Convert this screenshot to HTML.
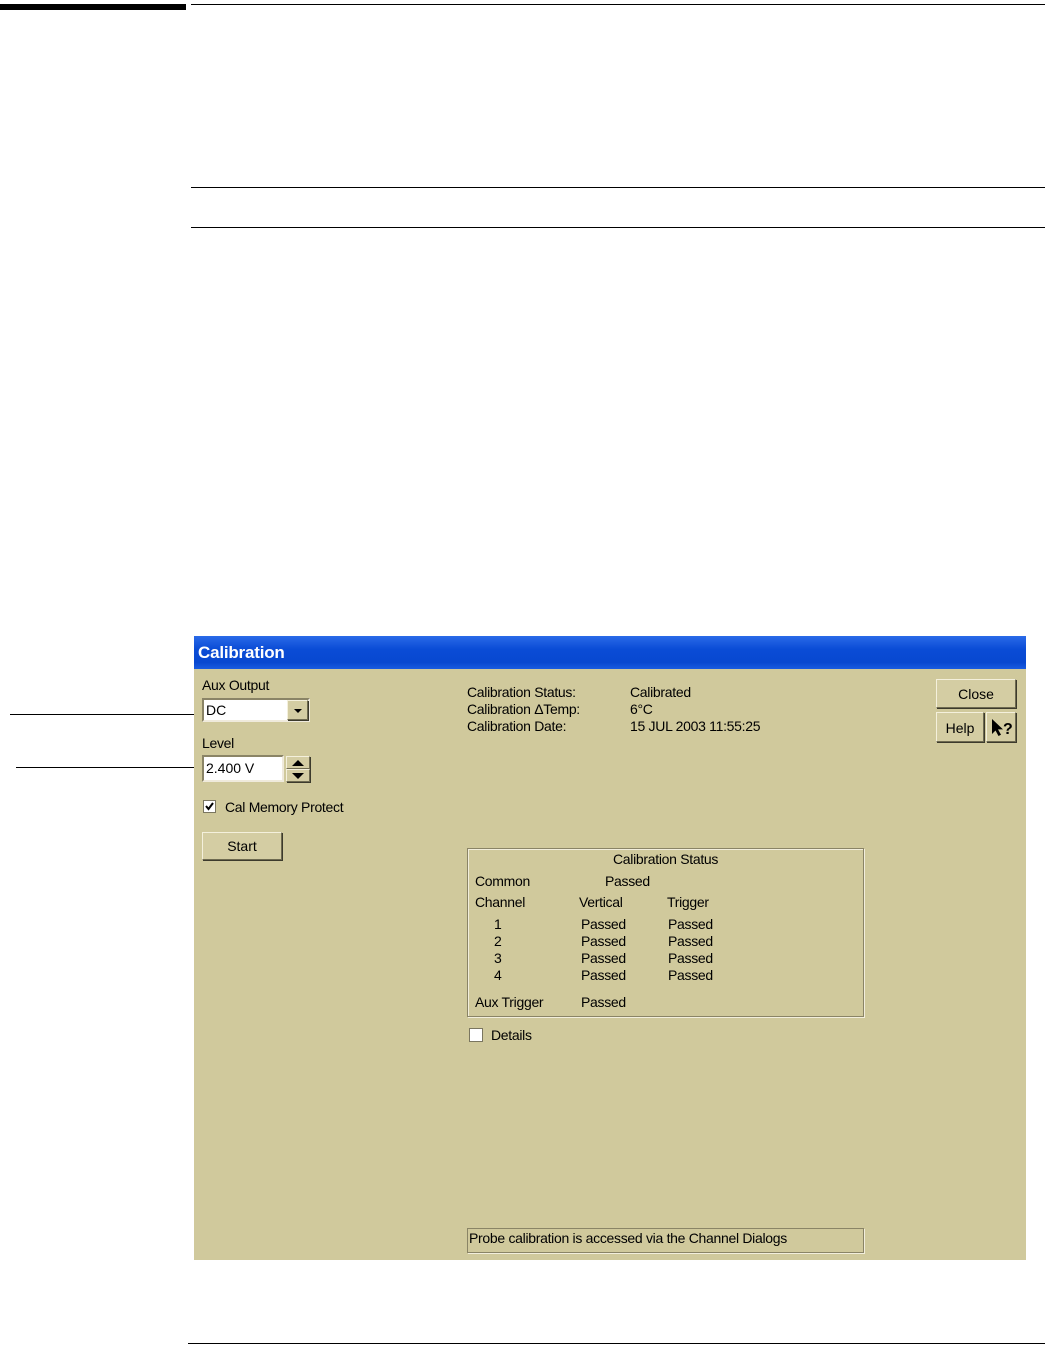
<!DOCTYPE html>
<html><head><meta charset="utf-8"><style>
body{margin:0;width:1047px;height:1345px;background:#fff;position:relative;font-family:"Liberation Sans",sans-serif;overflow:hidden}
.a{position:absolute}
.t{position:absolute;font-size:14px;color:#000;white-space:nowrap;letter-spacing:-0.3px}
.btn{position:absolute;background:#d4cda3;border:1px solid #f4f0dc;border-right-color:#6e6a50;border-bottom-color:#6e6a50;box-shadow:1px 1px 0 #3c3a2c;font-size:14px;text-align:center;box-sizing:border-box}
.field{position:absolute;background:#fff;border:2px solid #8a8466;border-right-color:#efeadc;border-bottom-color:#efeadc;box-sizing:border-box;font-size:14px;padding-left:2px}
svg{position:absolute;left:0;top:0}
</style></head><body>
<div class="a" style="left:0;top:4px;width:186px;height:6px;background:#000"></div>
<div class="a" style="left:191px;top:4px;width:854px;height:1px;background:#000"></div>
<div class="a" style="left:191px;top:187px;width:854px;height:1px;background:#000"></div>
<div class="a" style="left:191px;top:227px;width:854px;height:1px;background:#000"></div>
<div class="a" style="left:188px;top:1343px;width:857px;height:1px;background:#000"></div>
<div class="a" style="left:10px;top:714px;width:194px;height:1px;background:#000"></div>
<div class="a" style="left:16px;top:767px;width:188px;height:1px;background:#000"></div>

<div class="a" style="left:194px;top:636px;width:832px;height:624px;background:#d0c99c"></div>
<div class="a" style="left:194px;top:636px;width:832px;height:33px;background:linear-gradient(#2a6ae8,#0a4cd6 40%,#0848d0 80%,#1a5ce0)"></div>
<div class="t" style="left:198px;top:643px;color:#fff;font-weight:bold;font-size:17px;letter-spacing:-0.2px">Calibration</div>

<div class="t" style="left:202px;top:677px">Aux Output</div>
<div class="field" style="left:202px;top:698px;width:108px;height:24px;line-height:20px">DC</div>
<div class="btn" style="left:287px;top:700px;width:21px;height:20px"><svg width="20" height="19"><path d="M6 8h8l-4 4z" fill="#000"/></svg></div>
<div class="t" style="left:202px;top:735px">Level</div>
<div class="field" style="left:202px;top:755px;width:82px;height:27px;line-height:22px">2.400 V</div>
<div class="btn" style="left:286px;top:756px;width:24px;height:13px"><svg width="22" height="12"><path d="M5 9h12l-6-6z" fill="#000"/></svg></div>
<div class="btn" style="left:286px;top:769px;width:24px;height:13px"><svg width="22" height="12"><path d="M5 3h12l-6 6z" fill="#000"/></svg></div>
<div class="a" style="left:203px;top:800px;width:13px;height:13px;background:#fff;border:1px solid #7a7660;box-sizing:border-box"><svg width="11" height="11"><path d="M2 5l2.5 3L9 2" stroke="#000" stroke-width="2" fill="none"/></svg></div>
<div class="t" style="left:225px;top:799px">Cal Memory Protect</div>
<div class="btn" style="left:202px;top:832px;width:80px;height:28px;line-height:26px">Start</div>

<div class="t" style="left:467px;top:684px;line-height:17px">Calibration Status:<br>Calibration ΔTemp:<br>Calibration Date:</div>
<div class="t" style="left:630px;top:684px;line-height:17px">Calibrated<br>6°C<br>15 JUL 2003 11:55:25</div>

<div class="btn" style="left:936px;top:679px;width:80px;height:29px;line-height:28px">Close</div>
<div class="btn" style="left:936px;top:712px;width:48px;height:30px;line-height:30px">Help</div>
<div class="btn" style="left:986px;top:712px;width:30px;height:30px"><svg width="28" height="28"><path d="M5 6v15l3.5-3.5 3 5.5 2.5-1.3-3-5.3h5z" fill="#000"/><text x="16" y="21" font-family="Liberation Sans" font-weight="bold" font-size="16">?</text></svg></div>

<div class="a" style="left:467px;top:848px;width:397px;height:169px;border:1px solid #8a8466;box-shadow:inset 1px 1px 0 #f2eedc,1px 1px 0 #f2eedc;box-sizing:border-box"></div>
<div class="t" style="left:613px;top:851px">Calibration Status</div>
<div class="t" style="left:475px;top:873px">Common</div>
<div class="t" style="left:605px;top:873px">Passed</div>
<div class="t" style="left:475px;top:894px">Channel</div>
<div class="t" style="left:579px;top:894px">Vertical</div>
<div class="t" style="left:667px;top:894px">Trigger</div>
<div class="t" style="left:494px;top:916px;line-height:17px">1<br>2<br>3<br>4</div>
<div class="t" style="left:581px;top:916px;line-height:17px">Passed<br>Passed<br>Passed<br>Passed</div>
<div class="t" style="left:668px;top:916px;line-height:17px">Passed<br>Passed<br>Passed<br>Passed</div>
<div class="t" style="left:475px;top:994px">Aux Trigger</div>
<div class="t" style="left:581px;top:994px">Passed</div>
<div class="a" style="left:469px;top:1028px;width:14px;height:14px;background:#fff;border:1px solid #7a7660;box-sizing:border-box"></div>
<div class="t" style="left:491px;top:1027px">Details</div>

<div class="a" style="left:467px;top:1228px;width:397px;height:25px;border:1px solid #8a8466;box-shadow:1px 1px 0 #f2eedc;box-sizing:border-box"></div>
<div class="t" style="left:469px;top:1230px">Probe calibration is accessed via the Channel Dialogs</div>
</body></html>
